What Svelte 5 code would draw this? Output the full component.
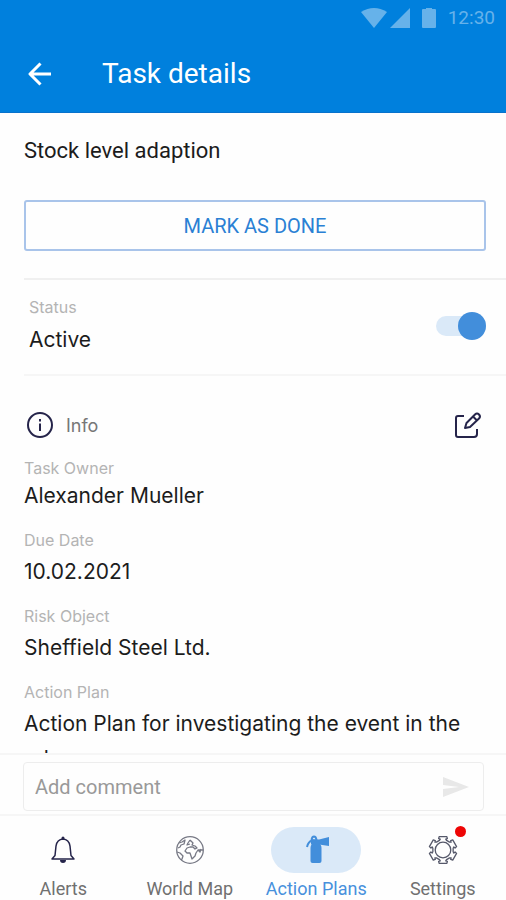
<script lang="ts">
	interface Detail {
		label: string;
		value: string;
		compact?: boolean;
	}

	const details: Detail[] = [
		{ label: 'Task Owner', value: 'Alexander Mueller', compact: true },
		{ label: 'Due Date', value: '10.02.2021' },
		{ label: 'Risk Object', value: 'Sheffield Steel Ltd.' },
		{ label: 'Action Plan', value: 'Action Plan for investigating the event in the release' }
	];

	const tabs = [
		{ id: 'alerts', label: 'Alerts' },
		{ id: 'map', label: 'World Map' },
		{ id: 'plans', label: 'Action Plans' },
		{ id: 'settings', label: 'Settings', badge: true }
	];

	let current = $state('plans');
	let active = $state(true);
	let done = $state(false);
	let comment = $state('');

	function sendComment(e: SubmitEvent) {
		e.preventDefault();
		comment = '';
	}

	// Six flared teeth around a centre of 15,15
	function gearPath() {
		const points: string[] = [];
		const corners = [
			[10.3, -20],
			[11.3, -14],
			[12.2, -21],
			[14, -16],
			[14, 16],
			[12.2, 21],
			[11.3, 14],
			[10.3, 20]
		];
		for (let tooth = 0; tooth < 6; tooth++) {
			for (const [radius, offset] of corners) {
				const angle = ((tooth * 60 - 90 + offset) * Math.PI) / 180;
				const x = 15 + radius * Math.cos(angle);
				const y = 15 + radius * Math.sin(angle);
				points.push(`${x.toFixed(2)} ${y.toFixed(2)}`);
			}
		}
		return `M${points.join('L')}Z`;
	}
</script>

<div class="screen">
	<header>
		<div class="status-bar">
			<svg width="26" height="20" viewBox="0 0 26 20" aria-hidden="true">
				<path d="M0 4Q13-4 26 4L13 20Z" />
			</svg>
			<svg width="20" height="20" viewBox="0 0 20 20" aria-hidden="true">
				<path d="M20 0V20H0Z" />
			</svg>
			<svg class="battery" width="14" height="20" viewBox="0 0 14 20" aria-hidden="true">
				<path d="M4 0H10V1H13Q14 1 14 2V19Q14 20 13 20H1Q0 20 0 19V2Q0 1 1 1H4Z" />
			</svg>
			<span>12:30</span>
		</div>
		<div class="toolbar">
			<button type="button" class="back" aria-label="Back">
				<svg width="24" height="24" viewBox="0 0 24 24" aria-hidden="true">
					<path d="M23 12H2M12.500 1.500L2 12L12.500 22.500" />
				</svg>
			</button>
			<h1>Task details</h1>
		</div>
	</header>

	<main>
		<h2>Stock level adaption</h2>
		<button type="button" class="done" aria-pressed={done} onclick={() => (done = !done)}>
			MARK AS DONE
		</button>

		<div class="status-row">
			<label for="status">
				<span class="caption">Status</span>
				<span class="value">Active</span>
			</label>
			<input id="status" type="checkbox" role="switch" class="switch" bind:checked={active} />
		</div>

		<section>
			<div class="info-head">
				<svg width="28" height="28" viewBox="0 0 28 28" aria-hidden="true">
					<circle cx="14" cy="14" r="12" />
					<path d="M14 12.500V20M14 8V10.500" />
				</svg>
				<h3>Info</h3>
				<button type="button" class="edit" aria-label="Edit">
					<svg width="30" height="30" viewBox="0 0 30 30" aria-hidden="true">
						<path d="M11 6H5Q3 6 3 8V25Q3 27 5 27H21Q24 27 24 24V19" />
						<path d="M12 18L13.500 13L22 4.500Q24 2.500 26 4.500Q28 6.500 26 8.500L17 17Z" />
						<path d="M20 6.500L24 10.500" />
					</svg>
				</button>
			</div>
			<dl>
				{#each details as detail (detail.label)}
					<div class="detail" class:compact={detail.compact}>
						<dt class="caption">{detail.label}</dt>
						<dd class="value">{detail.value}</dd>
					</div>
				{/each}
			</dl>
		</section>
	</main>

	<form onsubmit={sendComment}>
		<div class="field">
			<input type="text" placeholder="Add comment" aria-label="Add comment" bind:value={comment} />
			<button type="submit" aria-label="Send">
				<svg width="28" height="22" viewBox="0 0 28 22" aria-hidden="true">
					<path d="M1 1L27 11L1 21V13L17 11L1 9Z" />
				</svg>
			</button>
		</div>
	</form>

	<nav>
		{#each tabs as tab (tab.id)}
			<button
				type="button"
				class="tab"
				class:selected={tab.id === current}
				aria-current={tab.id === current ? 'page' : undefined}
				onclick={() => (current = tab.id)}
			>
				<span class="pill">
					<svg class="icon {tab.id}" width="30" height="30" viewBox="0 0 30 30" aria-hidden="true">
						{#if tab.id === 'alerts'}
							<path d="M4 24L7 20.500L8 11Q9 4.500 15 4Q21 4.500 22 11L23 20.500L26 24Z" />
							<path class="fill" d="M13.500 4V3A1.500 1.500 0 0 1 16.500 3V4ZM12 25H18A3 3 0 0 1 12 25Z" />
						{:else if tab.id === 'map'}
							<circle cx="15" cy="15" r="13.300" />
							<path
								d="M4 8L7 7L10 5L9 9L6 10L5 12L3 13M2 17L5 18L8 21L7 24L6 25M15 5L18 8L17 10L20 11L22 13L20 14L18 12L15 12L12 13L10 16L12 18L15 18L16 21L17 24L20 21L21 18L23 15H28M13 8L15 5M13 8L12 10L15 9M23 15L25 17L26 14"
							/>
						{:else if tab.id === 'plans'}
							<path class="fill" d="M9.500 13Q9.500 9 13 8H17Q20.500 9 20.500 13V26Q20.500 28 18.500 28H11.500Q9.500 28 9.500 26Z" />
							<path class="fill" d="M10 4L18 4.500L28 2V11L18 9.500H10Z" />
							<path d="M11 5.500Q7 7 6 12M10.500 5Q11 1.500 13 1.500Q15 1.500 15.500 5" />
						{:else}
							<path d={gearPath()} />
							<circle cx="15" cy="15" r="7.800" />
						{/if}
					</svg>
					{#if tab.badge}
						<span class="badge"></span>
					{/if}
				</span>
				{tab.label}
			</button>
		{/each}
	</nav>
</div>

<style>
	:global(body) {
		margin: 0;
		background: #fefefe;
	}

	.screen {
		display: flex;
		flex-direction: column;
		height: 100vh;
		font-family: Roboto, sans-serif;
		color: #1c1c1c;
	}

	h1,
	h2,
	h3,
	dl,
	dd {
		margin: 0;
		font-weight: 400;
	}

	button {
		padding: 0;
		border: none;
		background: none;
		font-family: inherit;
		cursor: pointer;
	}

	svg {
		display: block;
		fill: none;
		stroke-linejoin: round;
	}

	header {
		flex: none;
		background: #0080dd;
		border-bottom: 1px solid #0872cc;
		color: #fff;
	}

	.status-bar {
		display: flex;
		align-items: center;
		justify-content: flex-end;
		gap: 3px;
		height: 35px;
		padding-right: 11px;
		font-size: 19px;
		color: #66b2ea;
	}

	.status-bar svg {
		fill: currentColor;
	}

	.status-bar .battery {
		margin: 0 9px;
	}

	.toolbar {
		display: flex;
		align-items: center;
		gap: 50px;
		height: 77px;
		padding-left: 28px;
	}

	.back svg {
		stroke: #fff;
		stroke-width: 3;
	}

	h1 {
		font-size: 28px;
	}

	main {
		flex: 1;
		min-height: 0;
		overflow-y: auto;
		scrollbar-width: none;
		padding-left: 24px;
	}

	h2 {
		margin: 23px 0 34px;
		font-size: 22px;
		line-height: 30px;
	}

	.done {
		display: block;
		width: calc(100% - 20px);
		height: 51px;
		border: 2px solid #a9c4ea;
		border-radius: 3px;
		font-size: 20px;
		color: #2a80d4;
	}

	.status-row {
		display: flex;
		align-items: center;
		justify-content: space-between;
		height: 94px;
		margin-top: 27px;
		padding: 0 20px 0 5px;
		border-top: 2px solid #f0f0f0;
		border-bottom: 2px solid #f6f6f6;
	}

	.caption,
	.value {
		display: block;
		font-family: Inter, sans-serif;
	}

	.caption {
		font-size: 16px;
		line-height: 20px;
		color: #b4b4b4;
	}

	.value {
		font-size: 21px;
		line-height: 35px;
	}

	.status-row .caption {
		margin-bottom: 5px;
	}

	.switch {
		appearance: none;
		display: flex;
		align-items: center;
		width: 50px;
		height: 20px;
		margin: 0 0 2px;
		border-radius: 10px;
		background: #e4e4e4;
		cursor: pointer;
	}

	.switch::before {
		content: '';
		width: 28px;
		height: 28px;
		flex: none;
		border-radius: 50%;
		background: #9a9a9a;
	}

	.switch:checked {
		justify-content: flex-end;
		background: #dae9f8;
	}

	.switch:checked::before {
		background: #428edb;
	}

	.info-head {
		display: flex;
		align-items: center;
		gap: 12px;
		height: 30px;
		margin-top: 34px;
		padding: 0 23px 0 2px;
	}

	.info-head svg {
		stroke: #25244a;
		stroke-width: 2;
	}

	h3 {
		flex: 1;
		font-family: Inter, sans-serif;
		font-size: 18px;
		color: #777;
	}

	dl {
		margin-top: 18px;
	}

	.detail {
		display: flex;
		flex-direction: column;
		gap: 4px;
		margin-bottom: 17px;
		padding-right: 20px;
	}

	.detail.compact {
		gap: 0;
	}

	form {
		flex: none;
		padding: 7px 22px 3px 23px;
		border-top: 2px solid #f6f6f6;
		border-bottom: 2px solid #f6f6f6;
	}

	.field {
		display: flex;
		align-items: center;
		height: 47px;
		padding: 0 13px 0 11px;
		border: 1px solid #ededed;
		border-radius: 4px;
	}

	.field input {
		flex: 1;
		min-width: 0;
		padding: 0;
		border: none;
		outline: none;
		background: none;
		font-family: inherit;
		font-size: 20px;
		color: inherit;
	}

	.field input::placeholder {
		color: #999;
		opacity: 1;
	}

	.field svg {
		fill: #e8e8e8;
	}

	nav {
		flex: none;
		display: grid;
		grid-template-columns: repeat(4, 1fr);
		height: 84px;
		background: #fefefe;
	}

	.tab {
		display: flex;
		flex-direction: column;
		align-items: center;
		gap: 5px;
		padding-top: 11px;
		font-size: 18px;
		line-height: 22px;
		color: #707070;
	}

	.pill {
		position: relative;
		display: flex;
		align-items: center;
		justify-content: center;
		width: 90px;
		height: 46px;
		border-radius: 23px;
	}

	.selected {
		color: #4790dc;
	}

	.selected .pill {
		background: #dae9f8;
	}

	.icon {
		stroke: #55586a;
		stroke-width: 1.3;
	}

	.icon .fill {
		fill: #25244a;
		stroke: none;
	}

	.icon.alerts {
		stroke: #25244a;
		stroke-width: 1.5;
	}

	.icon.map {
		stroke: #777985;
	}

	.selected .icon {
		stroke: #428edb;
		stroke-width: 2;
	}

	.selected .icon .fill {
		fill: #428edb;
	}

	.badge {
		position: absolute;
		top: -1px;
		right: 22px;
		width: 11px;
		height: 11px;
		border-radius: 50%;
		background: #ee0505;
	}
</style>
